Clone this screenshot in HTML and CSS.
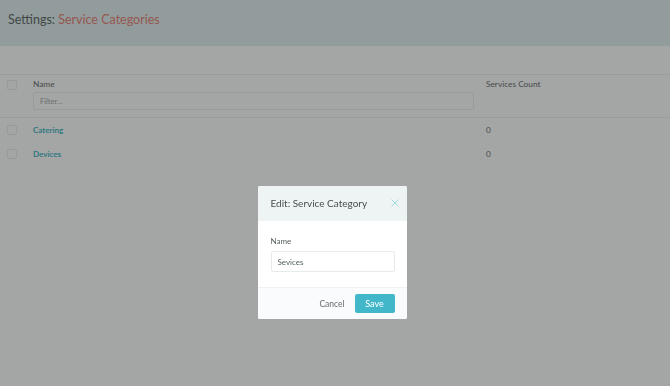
FILE: index.html
```html
<!DOCTYPE html>
<html lang="en">
<head>
<meta charset="UTF-8">
<meta name="viewport" content="width=device-width, initial-scale=1.0">
<title>Settings | Service Categories</title>
<link rel="stylesheet" href="styles.css">
</head>
<body>
    <header class="page-header">
        <h1>Settings: <span class="crumb">Service Categories</span></h1>
    </header>

    <div class="toolbar"></div>

    <div class="table">
        <div class="table-head">
            <div class="cell-check"><span class="checkbox"></span></div>
            <div class="cell-name">
                <div class="col-title">Name</div>
                <input type="text" class="filter-input" placeholder="Filter...">
            </div>
            <div class="cell-count">
                <div class="col-title">Services Count</div>
            </div>
        </div>
        <div class="table-row">
            <div class="cell-check"><span class="checkbox"></span></div>
            <div class="cell-name"><a href="#">Catering</a></div>
            <div class="cell-count">0</div>
        </div>
        <div class="table-row">
            <div class="cell-check"><span class="checkbox"></span></div>
            <div class="cell-name"><a href="#">Devices</a></div>
            <div class="cell-count">0</div>
        </div>
    </div>

    <div class="backdrop">
        <div class="modal">
            <div class="modal-header">
                <h2>Edit: Service Category</h2>
                <button type="button" class="close-button">
                    <svg width="8" height="8" viewBox="0 0 8 8"><path d="M0.5 0.5 L7.5 7.5 M7.5 0.5 L0.5 7.5" stroke="#8fd3db" stroke-width="0.8" fill="none"/></svg>
                </button>
            </div>
            <div class="modal-body">
                <label for="name">Name</label>
                <input type="text" id="name" class="name-input" value="Sevices">
            </div>
            <div class="modal-footer">
                <button type="button" class="cancel-button">Cancel</button>
                <button type="button" class="save-button">Save</button>
            </div>
        </div>
    </div>
</body>
</html>
```

FILE: styles.css
```css
body {
    margin: 0;
    padding: 0;
    height: 100vh;
    background: #ffffff;
    font-family: Lato, "Open Sans", sans-serif;
    color: #666e6e;
    overflow: hidden;
}

.page-header {
    height: 46px;
    box-sizing: border-box;
    padding: 12px 0 0 8px;
    background: #e2f1f1;
}

h1 {
    margin: 0;
    font-size: 12.5px;
    line-height: 16px;
    font-weight: 400;
    color: #5e6666;
}

.crumb {
    color: #e88074;
}

.toolbar {
    height: 28px;
    border-bottom: 1px solid #eef0f0;
}

.table-head,
.table-row {
    display: flex;
    font-size: 8.3px;
}

.table-head {
    padding: 3px 0 7px;
    border-bottom: 1px solid #eef0f0;
}

.table-row {
    height: 24px;
    align-items: center;
}

.cell-check {
    width: 33px;
    display: flex;
    justify-content: center;
    padding-right: 10px;
    box-sizing: border-box;
}

.table-head .cell-check {
    padding-top: 2px;
}

.checkbox {
    display: block;
    width: 8px;
    height: 8px;
    border: 1px solid #e8eded;
    border-radius: 2px;
}

.cell-name {
    width: 441px;
}

.cell-count {
    padding-left: 12px;
    color: #666e6e;
}

.col-title {
    height: 13px;
    line-height: 13px;
    color: #666e6e;
}

.filter-input {
    display: block;
    width: 100%;
    height: 18px;
    box-sizing: border-box;
    margin-top: 1px;
    border: 1px solid #eaeeee;
    border-radius: 2px;
    padding: 0 6px;
    font-family: Lato, sans-serif;
    font-size: 7.5px;
    outline: none;
}

.filter-input::placeholder {
    color: #a2aaaa;
}

.table-row a {
    color: #45b9c6;
    font-weight: 700;
    font-size: 8px;
    text-decoration: none;
}

.backdrop {
    position: fixed;
    top: 0;
    left: 0;
    width: 100%;
    height: 100%;
    background: rgba(20, 24, 24, 0.39);
    display: flex;
    justify-content: center;
    align-items: flex-start;
}

.modal {
    margin: 186px 6px 0 0;
    width: 149px;
    background: #ffffff;
    border-radius: 2px;
    overflow: hidden;
}

.modal-header {
    height: 35px;
    display: flex;
    align-items: center;
    justify-content: space-between;
    padding: 0 8px 1px 13px;
    box-sizing: border-box;
    background: #eef3f4;
}

h2 {
    margin: 0;
    font-size: 10px;
    font-weight: 400;
    color: #464e4e;
}

.close-button {
    border: none;
    background: none;
    padding: 0;
    display: flex;
}

.modal-body {
    padding: 15px 12px 15px 13px;
}

label {
    display: block;
    font-size: 8px;
    color: #555d5d;
    margin-bottom: 5px;
}

.name-input {
    display: block;
    width: 100%;
    height: 21px;
    box-sizing: border-box;
    border: 1px solid #e6ecec;
    border-radius: 2px;
    padding: 0 6px;
    font-family: Lato, sans-serif;
    font-size: 8px;
    color: #555d5d;
    outline: none;
}

.modal-footer {
    height: 31px;
    display: flex;
    align-items: center;
    justify-content: flex-end;
    padding: 0 12px;
    background: #f9fbfc;
    border-top: 1px solid #eef2f2;
}

.cancel-button {
    border: none;
    background: none;
    font-family: Lato, sans-serif;
    font-size: 8.5px;
    color: #666e6e;
    margin-right: 10px;
    padding: 0;
}

.save-button {
    width: 40px;
    height: 19px;
    border: none;
    border-radius: 2px;
    background: #43b7ca;
    color: #ffffff;
    font-family: Lato, sans-serif;
    font-size: 9px;
}
```
